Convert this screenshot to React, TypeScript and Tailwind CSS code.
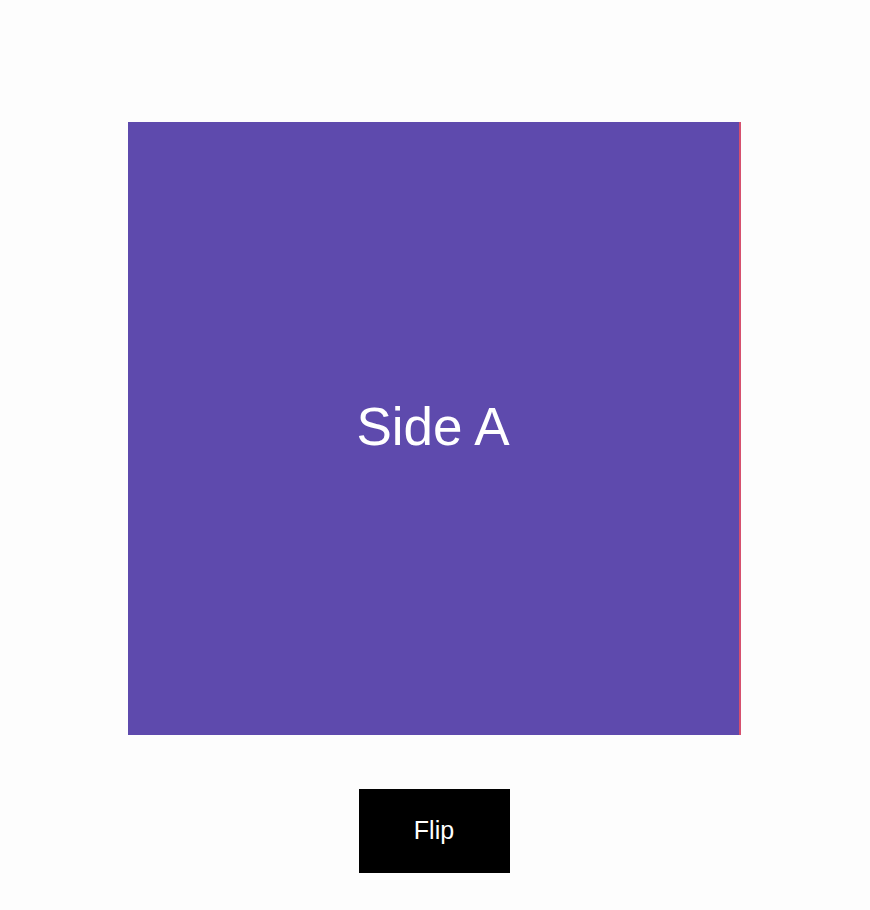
export default function App() {
  return (
    <div className="flex min-h-[910px] w-full flex-col items-center bg-[#fdfdfd] pr-[2px] pt-[122px] font-['Liberation_Sans',Arial,sans-serif]">
      <div className="flex h-[613px] w-[613px] items-center justify-center border-r-2 border-r-[#d6506e] bg-[#5e4aad]">
        <span className="pb-[4px] text-[53px] leading-none text-white">Side A</span>
      </div>
      <button className="mt-[54px] flex h-[84px] w-[151px] items-center justify-center bg-black text-[25px] text-white">
        Flip
      </button>
    </div>
  );
}
